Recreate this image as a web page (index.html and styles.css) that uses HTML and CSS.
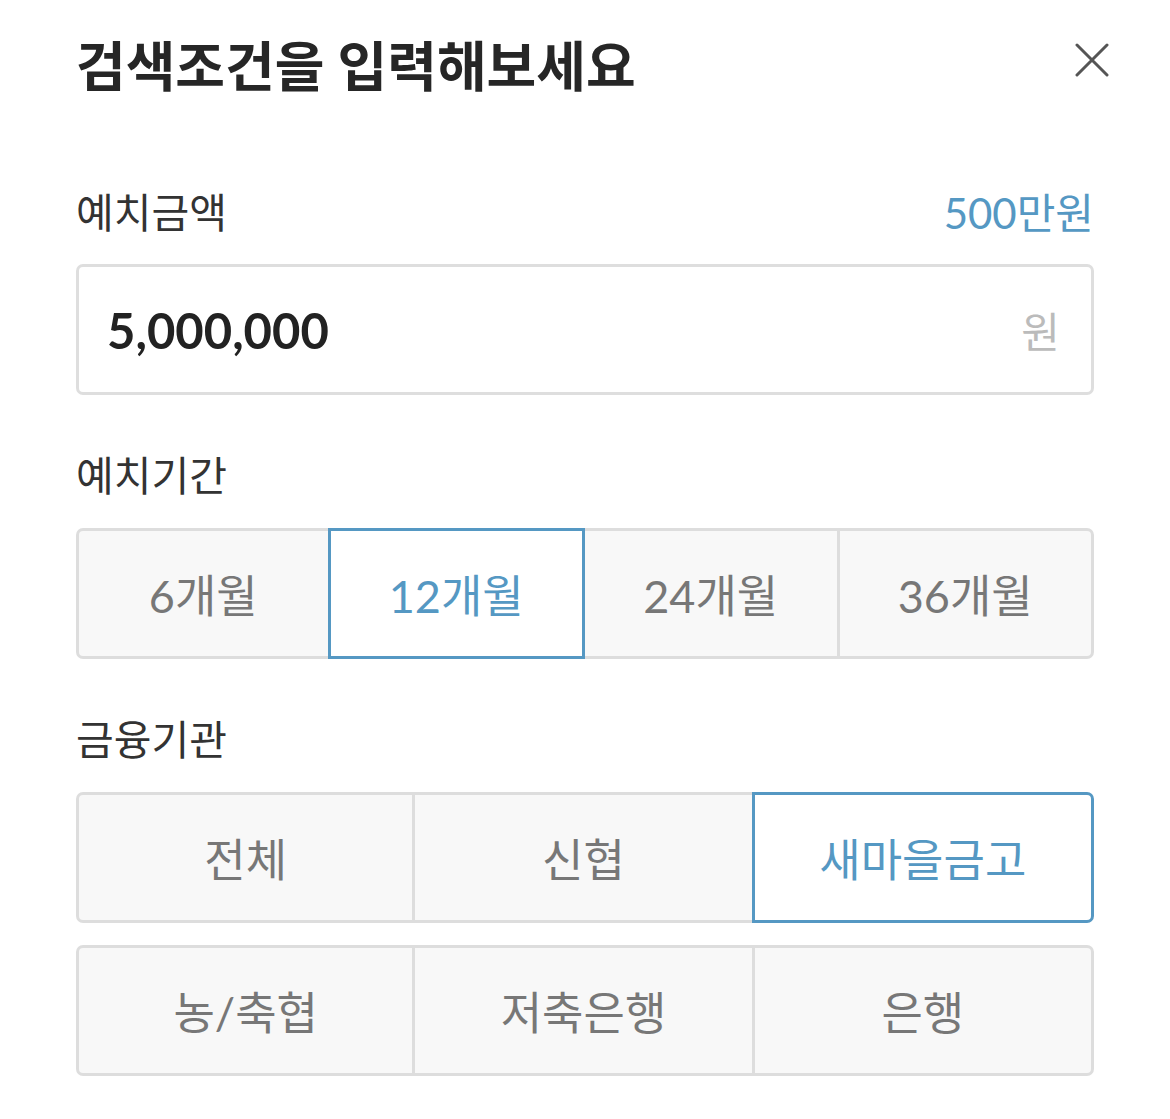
FILE: index.html
```html
<!DOCTYPE html>
<html lang="ko">
<head>
  <meta charset="UTF-8">
  <meta name="viewport" content="width=device-width, initial-scale=1">
  <title>검색조건</title>
  <link rel="stylesheet" href="styles.css">
</head>
<body>

  <div class="sheet">
    <header class="sheet-head">
      <h1>검색조건을 입력해보세요</h1>
      <button class="close-btn" aria-label="닫기">
        <svg width="34" height="34" viewBox="0 0 34 34">
          <path d="M2 2 L32 32 M32 2 L2 32" stroke="#555" stroke-width="3" stroke-linecap="round" fill="none"/>
        </svg>
      </button>
    </header>

    <section class="field">
      <div class="field-label">
        <span>예치금액</span>
        <span class="hint">500만원</span>
      </div>
      <div class="amount-box">
        <span class="amount">5,000,000</span>
        <span class="unit">원</span>
      </div>
    </section>

    <section class="field">
      <div class="field-label">
        <span>예치기간</span>
      </div>
      <div class="segments cols-4">
        <button class="seg">6개월</button>
        <button class="seg active">12개월</button>
        <button class="seg">24개월</button>
        <button class="seg">36개월</button>
      </div>
    </section>

    <section class="field">
      <div class="field-label">
        <span>금융기관</span>
      </div>
      <div class="segments cols-3">
        <button class="seg">전체</button>
        <button class="seg">신협</button>
        <button class="seg active">새마을금고</button>
      </div>
      <div class="segments cols-3 second">
        <button class="seg">농/축협</button>
        <button class="seg">저축은행</button>
        <button class="seg">은행</button>
      </div>
    </section>
  </div>

</body>
</html>
```

FILE: styles.css
```css
body {
  margin: 0;
  background-color: #ffffff;
  font-family: Lato, "Noto Sans CJK KR", sans-serif;
  color: #333333;
}
.sheet {
  padding: 27px 76px 40px;
}
.sheet-head {
  display: flex;
  justify-content: space-between;
  align-items: center;
}
.sheet-head h1 {
  margin: 0;
  font-size: 54px;
  line-height: 80px;
  font-weight: 700;
  color: #262626;
}
.close-btn {
  width: 34px;
  height: 34px;
  padding: 0;
  margin-right: -15px;
  margin-top: -14px;
  border: none;
  background: none;
  cursor: pointer;
}
.close-btn svg {
  display: block;
}
.field {
  margin-top: 78px;
}
.field + .field {
  margin-top: 53px;
}
.field-label {
  display: flex;
  justify-content: space-between;
  font-size: 41px;
  line-height: 56px;
  color: #333333;
  margin-bottom: 24px;
}
.hint {
  font-size: 42px;
  color: #5598c3;
}
.amount-box {
  display: flex;
  justify-content: space-between;
  align-items: center;
  height: 131px;
  box-sizing: border-box;
  border: 3px solid #dedede;
  border-radius: 7px;
  padding: 0 31px 0 28px;
  margin-top: -1px;
}
.amount {
  font-size: 49px;
  font-weight: 700;
  color: #222222;
}
.unit {
  font-size: 42px;
  color: #bbbbbb;
}
.segments {
  display: grid;
}
.cols-4 {
  grid-template-columns: repeat(4, 1fr);
}
.cols-3 {
  grid-template-columns: repeat(3, 1fr);
}
.segments.second {
  margin-top: 22px;
}
.seg {
  height: 131px;
  box-sizing: border-box;
  border: 3px solid #dddddd;
  background-color: #f8f8f8;
  font-family: inherit;
  font-size: 45px;
  color: #777777;
  padding: 0;
  margin-left: -3px;
  cursor: pointer;
}
.seg:first-child {
  margin-left: 0;
  border-radius: 7px 0 0 7px;
}
.seg:last-child {
  border-radius: 0 7px 7px 0;
}
.seg.active {
  position: relative;
  z-index: 1;
  border-color: #5598c3;
  background-color: #ffffff;
  color: #5598c3;
}
```
